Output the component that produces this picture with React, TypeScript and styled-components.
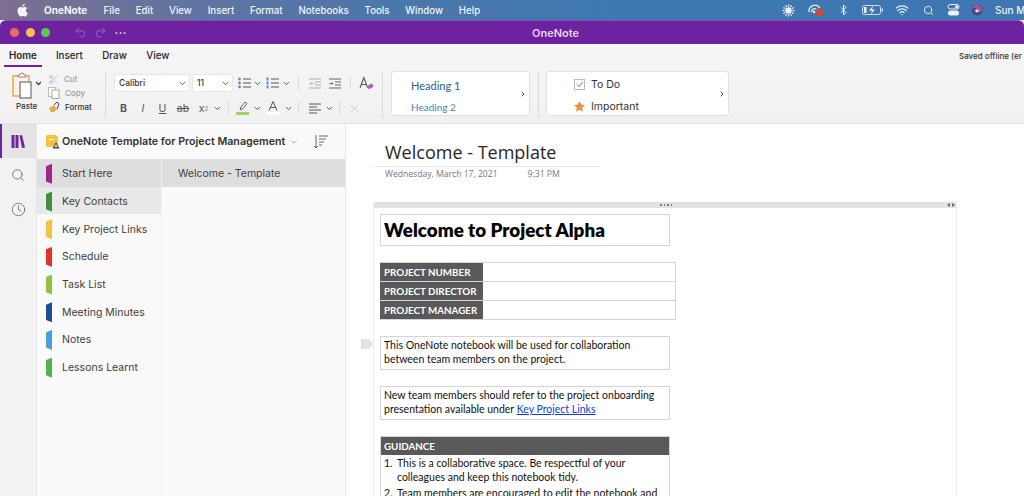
import React from 'react';
import styled, { createGlobalStyle } from 'styled-components';
import { ChevronDown, ChevronRight, Clock, Redo2, Scissors, Search, Undo2, Wifi, X } from 'lucide-react';

const GlobalStyle = createGlobalStyle`
	html, body { margin: 0; padding: 0; height: 100%; overflow: hidden; }
	body { font-family: Inter, "Liberation Sans", sans-serif; background: #fafafa; }
`;

const Screen = styled.div`
	width: 1024px;
	height: 496px;
	display: flex;
	flex-direction: column;
	overflow: hidden;
`;

// mac menu bar
const MenuBar = styled.div`
	height: 20px;
	flex: none;
	display: flex;
	align-items: center;
	padding-left: 16px;
	background: linear-gradient(90deg, #7d6f90 0%, #5f74a3 20%, #4a77ac 40%, #3e78b2 60%, #3d76b0 100%);
	color: #f2f4f8;
	font-size: 10px;
	font-weight: 500;
	white-space: nowrap;
`;
const MenuItem = styled.span<{ $bold?: boolean }>`
	margin-right: ${(p) => (p.$bold ? 16.4 : 15.8)}px;
	font-size: ${(p) => (p.$bold ? 10 : 9.7)}px;
	font-weight: ${(p) => (p.$bold ? 700 : 500)};
`;
const AppleLogo = styled.svg`
	width: 13px;
	height: 14px;
	margin-right: 15px;
	fill: #f4f4f6;
`;
const StatusArea = styled.div`
	margin-left: auto;
	display: flex;
	align-items: center;
	width: 245px;
	flex: none;
	color: #eef2f8;
`;
const StatusSlot = styled.span<{ $w: number }>`
	width: ${(p) => p.$w}px;
	flex: none;
	display: flex;
	align-items: center;
	justify-content: center;
`;
const Clockline = styled.span`
	margin-left: 4px;
`;

// purple window title bar
const TitleBar = styled.div`
	height: 24px;
	flex: none;
	display: flex;
	align-items: center;
	padding-left: 10px;
	background: #6d22a0;
	border-top: 1px solid #8a4fae;
	border-radius: 6px 6px 0 0;
	box-sizing: border-box;
	position: relative;
`;
const Light = styled.span<{ $c: string }>`
	width: 9px;
	height: 9px;
	border-radius: 50%;
	background: ${(p) => p.$c};
	margin-right: 6.500px;
`;
const QuickTools = styled.div`
	display: flex;
	align-items: center;
	gap: 7px;
	margin-left: 17px;
	color: #a176c2;
`;
const MoreDots = styled.span`
	color: #e6d8ef;
	font-size: 11px;
	font-weight: 700;
	letter-spacing: 0.5px;
	margin-left: 1px;
	line-height: 10px;
	padding-bottom: 5px;
`;
const WindowName = styled.span`
	position: absolute;
	left: 532px;
	top: 5px;
	color: #e3d3ee;
	font-size: 11px;
	font-weight: 600;
`;

// ribbon
const Ribbon = styled.div`
	height: 80px;
	flex: none;
	background: linear-gradient(#f6f6f6, #f1f1f1);
	border-bottom: 1px solid #e2e2e2;
	box-sizing: border-box;
	display: flex;
	flex-direction: column;
`;
const TabRow = styled.div`
	height: 23px;
	flex: none;
	display: flex;
	align-items: center;
	padding-left: 4px;
	position: relative;
`;
const Tab = styled.span<{ $active?: boolean }>`
	height: 21px;
	margin-top: 2px;
	box-sizing: border-box;
	padding: 4px 5px 0;
	margin-right: ${(p) => (p.$active ? 9 : 9.500)}px;
	font-size: 9.800px;
	font-weight: ${(p) => (p.$active ? 600 : 500)};
	color: #262626;
	border-bottom: 2px solid ${(p) => (p.$active ? '#6d22a0' : 'transparent')};
`;
const SavedNote = styled.span`
	position: absolute;
	left: 959px;
	top: 7px;
	font-size: 8px;
	font-weight: 500;
	color: #333;
	white-space: nowrap;
`;
const ToolRow = styled.div`
	display: flex;
	align-items: stretch;
	padding: 4px 0 0 10px;
	height: 47px;
`;
const Divider = styled.div<{ $mx: string }>`
	width: 1px;
	flex: none;
	background: #dcdcdc;
	margin: ${(p) => p.$mx};
`;
const PasteGroup = styled.div`
	width: 38px;
	flex: none;
	padding-top: 1px;
	display: flex;
	flex-direction: column;
	align-items: flex-start;
	font-size: 8px;
	font-weight: 500;
	color: #333;
`;
const PasteLabel = styled.span`
	margin: 1px 0 0 6px;
`;
const ClipGroup = styled.div`
	display: flex;
	flex-direction: column;
	gap: 2px;
	padding-top: 2px;
	width: 57px;
	flex: none;
`;
const ClipRow = styled.div<{ $dim?: boolean }>`
	display: flex;
	align-items: center;
	gap: 5px;
	height: 12px;
	font-size: 8px;
	font-weight: 500;
	color: ${(p) => (p.$dim ? '#9c9c9c' : '#333')};
`;
const FontGroup = styled.div`
	width: 268px;
	flex: none;
	display: flex;
	flex-direction: column;
	gap: 7px;
	padding-top: 3px;
`;
const IconRow = styled.div`
	display: flex;
	align-items: center;
	height: 18px;
`;
const Select = styled.div<{ $w: number }>`
	width: ${(p) => p.$w}px;
	height: 18px;
	box-sizing: border-box;
	margin-right: 2px;
	background: #fff;
	border-radius: 3px;
	border: 1px solid #e8e8e8;
	display: flex;
	align-items: center;
	justify-content: space-between;
	padding: 0 2px 0 4px;
	font-size: 8.500px;
	font-weight: 500;
	color: #333;
`;
const FormatBtn = styled.span<{ $w?: number; $ml?: number; $italic?: boolean; $bold?: boolean; $deco?: string }>`
	width: ${(p) => p.$w ?? 20}px;
	margin-left: ${(p) => p.$ml ?? 0}px;
	flex: none;
	display: inline-flex;
	align-items: center;
	justify-content: center;
	font-size: 10.500px;
	font-weight: ${(p) => (p.$bold ? 700 : 400)};
	font-style: ${(p) => (p.$italic ? 'italic' : 'normal')};
	text-decoration: ${(p) => p.$deco ?? 'none'};
	color: #555;
`;
const Subscript = styled.sub`
	font-size: 6px;
	color: #4a90d9;
`;
const Caret = styled(ChevronDown).attrs({ size: 9, strokeWidth: 2.400 })`
	color: #444;
	flex: none;
`;
const ThinRule = styled.span<{ $ml: number }>`
	width: 1px;
	height: 14px;
	margin-left: ${(p) => p.$ml}px;
	background: #ddd;
	flex: none;
`;
const StyleCard = styled.div<{ $w: number }>`
	width: ${(p) => p.$w}px;
	height: 45px;
	box-sizing: border-box;
	flex: none;
	background: #fff;
	border: 1px solid #e0e0e0;
	border-radius: 3px;
	display: flex;
	align-items: center;
	position: relative;
`;
const CardList = styled.div<{ $pl: number; $pt: number; $gap: number }>`
	display: flex;
	flex-direction: column;
	gap: ${(p) => p.$gap}px;
	padding: ${(p) => p.$pt}px 0 0 ${(p) => p.$pl}px;
	flex: 1;
`;
const CardArrow = styled(ChevronRight).attrs({ size: 8, strokeWidth: 3 })`
	color: #444;
	margin-right: 2px;
	flex: none;
`;
const HeadingOne = styled.span`
	font-family: Lato, sans-serif;
	font-size: 11px;
	color: #2f5b92;
`;
const HeadingTwo = styled.span`
	font-family: Lato, sans-serif;
	font-size: 10px;
	color: #3f7fc4;
`;
const TagRow = styled.div`
	display: flex;
	align-items: center;
	gap: 6px;
	font-size: 10.500px;
	color: #333;
`;

// main body
const Main = styled.div`
	flex: 1;
	display: flex;
	min-height: 0;
`;
const Rail = styled.div`
	width: 37px;
	flex: none;
	background: #f2f2f2;
	display: flex;
	flex-direction: column;
	align-items: stretch;
	border-right: 1px solid #e6e6e6;
	box-sizing: border-box;
`;
const RailButton = styled.div<{ $active?: boolean }>`
	height: 34px;
	display: flex;
	align-items: center;
	justify-content: center;
	color: #666;
	background: ${(p) => (p.$active ? '#e4e4e4' : 'transparent')};
	box-shadow: ${(p) => (p.$active ? 'inset 2px 0 0 #6d22a0' : 'none')};
`;
const Nav = styled.div`
	width: 309px;
	flex: none;
	display: flex;
	flex-direction: column;
	background: #fafafa;
	border-right: 1px solid #e8e8e8;
	box-sizing: border-box;
`;
const NotebookHeader = styled.div`
	height: 35px;
	flex: none;
	display: flex;
	align-items: center;
	padding-left: 8px;
	font-size: 10.700px;
	font-weight: 600;
	color: #333;
	white-space: nowrap;
`;
const NotebookName = styled.span`
	margin-left: 1px;
`;
const NotebookCaret = styled(ChevronDown).attrs({ size: 10, strokeWidth: 1.500 })`
	color: #777;
	margin-left: 4px;
`;
const SortIcon = styled.svg`
	width: 16px;
	height: 15px;
	margin-left: 14px;
`;
const Columns = styled.div`
	flex: 1;
	display: flex;
`;
const SectionList = styled.div`
	width: 125px;
	flex: none;
	border-right: 1px solid #efefef;
	box-sizing: border-box;
`;
const SectionRow = styled.div<{ $bg?: string }>`
	height: 27.700px;
	box-sizing: border-box;
	display: flex;
	align-items: center;
	padding: 2px 0 0 9px;
	gap: 10px;
	font-size: 10.500px;
	color: #404040;
	background: ${(p) => p.$bg ?? 'transparent'};
`;
const SectionTab = styled.span<{ $c: string }>`
	width: 6px;
	height: 20px;
	flex: none;
	background: ${(p) => p.$c};
	clip-path: polygon(0 12%, 100% 0, 100% 100%, 0 88%);
`;
const PageList = styled.div`
	flex: 1;
`;
const PageRow = styled.div`
	height: 28px;
	display: flex;
	align-items: center;
	padding-left: 16px;
	font-size: 10.500px;
	color: #404040;
	background: #dedede;
`;

// note canvas
const Canvas = styled.div`
	flex: 1;
	min-width: 0;
	background: #fff;
	padding: 17px 0 0 29px;
	font-family: Lato, "Liberation Sans", sans-serif;
	overflow: hidden;
`;
const PageTitle = styled.div`
	width: 215px;
	padding-left: 10px;
	height: 25px;
	font-family: "Open Sans", sans-serif;
	font-size: 18px;
	line-height: 22px;
	color: #262626;
	border-bottom: 1px solid #e4e4e4;
	white-space: nowrap;
`;
const PageDate = styled.div`
	display: flex;
	gap: 30px;
	padding: 1px 0 0 10px;
	height: 34px;
	font-family: "Open Sans", sans-serif;
	font-size: 8.600px;
	line-height: 12px;
	color: #777;
`;
const NoteBox = styled.div`
	width: 584px;
	position: relative;
	border-left: 1px solid #ececec;
	border-right: 1px solid #ececec;
	box-sizing: border-box;
	height: 300px;
	margin-left: -2px;
`;
const NoteGrip = styled.div`
	height: 6px;
	background: #e2e2e2;
	display: flex;
	align-items: center;
	padding-left: 286px;
	gap: 2px;
`;
const GripDot = styled.span`
	width: 1.500px;
	height: 1.500px;
	background: #777;
`;
const ResizeMark = styled.svg`
	position: absolute;
	right: 1px;
	top: 1px;
	width: 8px;
	height: 4px;
`;
const NoteBody = styled.div`
	padding: 6px 0 0 6px;
	color: #111;
`;
const Headline = styled.div`
	width: 290px;
	height: 32px;
	box-sizing: border-box;
	border: 1px solid #d5d5d5;
	padding-left: 3px;
	font-size: 18.800px;
	line-height: 29px;
	font-weight: 800;
	color: #000;
	white-space: nowrap;
`;
const InfoTable = styled.div`
	width: 296px;
	margin-top: 16px;
	display: grid;
	grid-template-columns: 103px 1fr;
	grid-auto-rows: 19px;
	border-top: 1px solid #d5d5d5;
`;
const InfoLabel = styled.div`
	background: #595959;
	color: #fff;
	font-size: 9.800px;
	font-weight: 700;
	line-height: 18px;
	padding-left: 4px;
	border-bottom: 1px solid #d5d5d5;
	box-sizing: border-box;
	white-space: nowrap;
`;
const InfoValue = styled.div`
	border: 1px solid #d5d5d5;
	border-width: 0 1px 1px 0;
`;
const TextBox = styled.div`
	width: 290px;
	height: 34px;
	margin-top: 16px;
	box-sizing: border-box;
	border: 1px solid #d5d5d5;
	padding: 2px 3px 0;
	font-size: 10.500px;
	line-height: 13.700px;
	white-space: nowrap;
	position: relative;
`;
const ParaHandle = styled.svg`
	position: absolute;
	left: -20px;
	top: 2px;
	width: 12px;
	height: 10px;
`;
const DocLink = styled.a`
	color: #0a3fe0;
	text-decoration: underline;
`;
const GuidanceBox = styled.div`
	width: 290px;
	margin-top: 16px;
	box-sizing: border-box;
	border: 1px solid #d5d5d5;
	font-size: 10.500px;
	line-height: 13.800px;
`;
const GuidanceHead = styled.div`
	height: 18px;
	background: #595959;
	color: #fff;
	font-weight: 700;
	font-size: 9.800px;
	line-height: 18px;
	padding-left: 3px;
`;
const GuidanceItem = styled.div`
	display: flex;
	padding: 2px 0 0 3px;
	white-space: nowrap;
`;
const ItemNumber = styled.span`
	width: 13px;
	flex: none;
`;

const MENUS = ['File', 'Edit', 'View', 'Insert', 'Format', 'Notebooks', 'Tools', 'Window', 'Help'];
const SECTIONS = [
	{ name: 'Start Here', color: '#a6208e', bg: '#dedede' },
	{ name: 'Key Contacts', color: '#3f8f3f', bg: '#e9e9e9' },
	{ name: 'Key Project Links', color: '#f7c23e' },
	{ name: 'Schedule', color: '#e0312a' },
	{ name: 'Task List', color: '#8cc63f' },
	{ name: 'Meeting Minutes', color: '#1f4e8f' },
	{ name: 'Notes', color: '#479fdc' },
	{ name: 'Lessons Learnt', color: '#4fb34f' },
];

const BulletIcon = ({ numbered }: { numbered?: boolean }) => (
	<svg width="13" height="12" viewBox="0 0 13 12">
		{[2, 6, 10].map((y) => (
			<g key={y}>
				{numbered ? <rect x="0.500" y={y - 1.500} width="2" height="3" fill="#4a90d9" /> : <circle cx="1.500" cy={y} r="1.400" fill="#4a90d9" />}
				<line x1="5" x2="13" y1={y} y2={y} stroke="#555" strokeWidth="1" />
			</g>
		))}
	</svg>
);

const IndentIcon = ({ reverse }: { reverse?: boolean }) => (
	<svg width="12" height="11" viewBox="0 0 12 11" opacity={reverse ? 0.5 : 1}>
		<line x1="0" x2="12" y1="1" y2="1" stroke="#666" />
		<line x1="6" x2="12" y1="4" y2="4" stroke="#666" />
		<line x1="6" x2="12" y1="7" y2="7" stroke="#666" />
		<line x1="0" x2="12" y1="10" y2="10" stroke="#666" />
		<path d={reverse ? 'M5 5.500H1M2.500 4L1 5.500 2.500 7' : 'M0 5.500H4M2.500 4L4 5.500 2.500 7'} stroke="#4a90d9" fill="none" />
	</svg>
);

function App() {
	return (
		<Screen>
			<GlobalStyle />
			<MenuBar>
				<AppleLogo viewBox="0 0 14 16">
					<path d="M10.800 8.500c0-1.700 1.400-2.500 1.500-2.600-.8-1.200-2.100-1.400-2.500-1.400-1.100-.1-2.100.6-2.600.6-.6 0-1.400-.6-2.300-.6C3.700 4.500 2.500 5.200 1.900 6.300.6 8.500 1.600 11.800 2.800 13.600c.6.900 1.300 1.900 2.300 1.800.9 0 1.300-.6 2.400-.6s1.400.6 2.400.6 1.600-.9 2.200-1.800c.7-1 1-2 1-2.100-.1 0-2.300-.9-2.300-3zM9 3.200c.5-.6.800-1.500.7-2.300-.7 0-1.600.5-2.100 1.100-.5.500-.9 1.400-.8 2.200.8.100 1.700-.4 2.200-1z" />
				</AppleLogo>
				<MenuItem $bold>OneNote</MenuItem>
				{MENUS.map((m) => (
					<MenuItem key={m}>{m}</MenuItem>
				))}
				<StatusArea>
					<StatusSlot $w={18}>
						<svg width="13" height="13" viewBox="0 0 13 13">
							<circle cx="6.500" cy="6.500" r="3.200" fill="#f2f4f8" />
							{[0, 30, 60, 90, 120, 150, 180, 210, 240, 270, 300, 330].map((a) => (
								<line key={a} x1="6.500" y1="0.500" x2="6.500" y2="2.500" stroke="#f2f4f8" strokeWidth="1.300" transform={`rotate(${a} 6.500 6.500)`} />
							))}
						</svg>
					</StatusSlot>
					<StatusSlot $w={36}>
						<svg width="17" height="14" viewBox="0 0 17 14">
							<path d="M2 9a6 6 0 0 1 11-4M4.500 9a3.500 3.500 0 0 1 5-3" fill="none" stroke="#e6ebf2" strokeWidth="1.300" />
							<circle cx="7" cy="9" r="1.300" fill="#e6ebf2" />
							<circle cx="12.500" cy="9.500" r="3.500" fill="#e0451f" />
						</svg>
					</StatusSlot>
					<StatusSlot $w={20}>
						<svg width="7" height="12" viewBox="0 0 7 12">
							<path d="M1 3.500l5 5L3.500 11V1L6 3.500l-5 5" fill="none" stroke="#eef2f8" strokeWidth="1" />
						</svg>
					</StatusSlot>
					<StatusSlot $w={38}>
						<svg width="21" height="10" viewBox="0 0 21 10">
							<rect x="0.500" y="0.500" width="18" height="9" rx="2" fill="none" stroke="#d6deea" />
							<rect x="19.500" y="3.500" width="1.500" height="3" fill="#d6deea" />
							<rect x="2" y="2" width="2.500" height="6" fill="#eef2f8" />
							<path d="M11 1L7 5.500h3L9 9l4-4.500h-3z" fill="#eef2f8" />
						</svg>
					</StatusSlot>
					<StatusSlot $w={22}>
						<Wifi size={14} strokeWidth={2.200} />
					</StatusSlot>
					<StatusSlot $w={30}>
						<Search size={11} strokeWidth={2} />
					</StatusSlot>
					<StatusSlot $w={20}>
						<svg width="13" height="12" viewBox="0 0 13 12">
							<rect x="1" y="0.500" width="11" height="4.500" rx="2.200" fill="none" stroke="#eef2f8" />
							<circle cx="9.500" cy="2.700" r="1.500" fill="#eef2f8" />
							<rect x="1" y="6.500" width="11" height="5" rx="2.500" fill="#eef2f8" />
						</svg>
					</StatusSlot>
					<StatusSlot $w={28}>
						<svg width="12" height="12" viewBox="0 0 12 12">
							<circle cx="6" cy="6" r="5.500" fill="#4a4a78" />
							<path d="M1 6c2-3 3-3 5 0s3 3 5 0c-1-4-3-5-5-5S2 2 1 6z" fill="#b0509a" />
							<path d="M4 6.500c1-1.500 3-1.500 4 0-1 2.500-3 2.500-4 0z" fill="#e8eef6" />
						</svg>
					</StatusSlot>
					<Clockline>Sun M</Clockline>
				</StatusArea>
			</MenuBar>

			<TitleBar>
				<Light $c="#ed6a5e" />
				<Light $c="#f4bf4f" />
				<Light $c="#61c554" />
				<QuickTools>
					<Undo2 size={13} strokeWidth={1.500} />
					<Redo2 size={13} strokeWidth={1.500} />
					<MoreDots>...</MoreDots>
				</QuickTools>
				<WindowName>OneNote</WindowName>
			</TitleBar>

			<Ribbon>
				<TabRow>
					<Tab $active>Home</Tab>
					<Tab>Insert</Tab>
					<Tab>Draw</Tab>
					<Tab>View</Tab>
					<SavedNote>Saved offline (er</SavedNote>
				</TabRow>
				<ToolRow>
					<PasteGroup>
						<svg width="31" height="28" viewBox="0 0 31 28">
							<path d="M5 4h14v20H3V4z" fill="#fdf4e6" stroke="#eda64e" strokeWidth="1.500" />
							<path d="M8 5V3h2a2 2 0 0 1 4 0h2v2z" fill="#fff" stroke="#888" />
							<rect x="10" y="10" width="11" height="16" fill="#fff" stroke="#555" />
							<path d="M26 10l2.500 2.500L31 10" fill="none" stroke="#444" strokeWidth="1.300" />
						</svg>
						<PasteLabel>Paste</PasteLabel>
					</PasteGroup>
					<ClipGroup>
						<ClipRow $dim>
							<Scissors size={11} strokeWidth={1.200} color="#8da6c0" />
							Cut
						</ClipRow>
						<ClipRow $dim>
							<svg width="12" height="12" viewBox="0 0 12 12">
								<rect x="0.500" y="0.500" width="7" height="9" fill="#fff" stroke="#bbb" />
								<rect x="4" y="3" width="7" height="8.500" fill="#fff" stroke="#aaa" />
							</svg>
							Copy
						</ClipRow>
						<ClipRow>
							<svg width="12" height="12" viewBox="0 0 12 12">
								<path d="M1 7l5-3 3 4-3 3H3z" fill="#eda64e" />
								<path d="M6 4l3-3 2 2-2 5" fill="none" stroke="#444" />
							</svg>
							Format
						</ClipRow>
					</ClipGroup>
					<Divider $mx="0 8px 0 0" />
					<FontGroup>
						<IconRow>
							<Select $w={76}>
								Calibri
								<Caret />
							</Select>
							<Select $w={41}>
								11
								<Caret />
							</Select>
							<FormatBtn $w={18}>
								<BulletIcon />
							</FormatBtn>
							<Caret />
							<FormatBtn $w={20}>
								<BulletIcon numbered />
							</FormatBtn>
							<Caret />
							<ThinRule $ml={7} />
							<FormatBtn $ml={6}>
								<IndentIcon reverse />
							</FormatBtn>
							<FormatBtn>
								<IndentIcon />
							</FormatBtn>
							<ThinRule $ml={5} />
							<FormatBtn $ml={5}>
								<svg width="15" height="15" viewBox="0 0 14 14">
									<path d="M1 11L4.500 1.500 8 11M2.300 8h4.400" fill="none" stroke="#555" />
									<rect x="8" y="8" width="5.500" height="3.500" rx="1" fill="#b25fc4" transform="rotate(-30 10.500 10)" />
								</svg>
							</FormatBtn>
						</IconRow>
						<IconRow>
							<FormatBtn $w={19} $bold>
								B
							</FormatBtn>
							<FormatBtn $w={20} $italic>
								I
							</FormatBtn>
							<FormatBtn $w={19} $deco="underline">
								U
							</FormatBtn>
							<FormatBtn $w={22} $deco="line-through">
								ab
							</FormatBtn>
							<FormatBtn $w={19}>
								x<Subscript>2</Subscript>
							</FormatBtn>
							<Caret />
							<ThinRule $ml={6} />
							<FormatBtn $ml={4}>
								<svg width="14" height="14" viewBox="0 0 14 14">
									<path d="M4 9l1-3 4-5 2 1.500-4 5z" fill="none" stroke="#666" />
									<rect x="0" y="11" width="13" height="3" fill="#9fd36b" />
								</svg>
							</FormatBtn>
							<Caret />
							<FormatBtn $w={22}>
								<svg width="12" height="14" viewBox="0 0 12 14">
									<path d="M2 9.500L6 0.500l4 9M3.300 6.500h5.400" fill="none" stroke="#555" />
									<rect x="0" y="11" width="12" height="3" fill="#fff" />
								</svg>
							</FormatBtn>
							<Caret />
							<ThinRule $ml={5} />
							<FormatBtn $ml={6}>
								<svg width="12" height="11" viewBox="0 0 12 11">
									<path d="M0 1h12M0 4h8M0 7h12M0 10h8" stroke="#555" />
								</svg>
							</FormatBtn>
							<Caret />
							<ThinRule $ml={5} />
							<FormatBtn $w={28}>
								<X size={13} strokeWidth={1.200} color="#e8a8a0" />
							</FormatBtn>
						</IconRow>
					</FontGroup>
					<Divider $mx="0 8px 0 0" />
					<StyleCard $w={139}>
						<CardList $pl={19} $pt={5} $gap={9}>
							<HeadingOne>Heading 1</HeadingOne>
							<HeadingTwo>Heading 2</HeadingTwo>
						</CardList>
						<CardArrow />
					</StyleCard>
					<Divider $mx="0 7px 0 8px" />
					<StyleCard $w={183}>
						<CardList $pl={27} $pt={3} $gap={9}>
							<TagRow>
								<svg width="11" height="11" viewBox="0 0 11 11">
									<rect x="0.500" y="0.500" width="10" height="10" fill="#fff" stroke="#a8bfd6" />
									<path d="M3 5.500l2 2 3.500-4" fill="none" stroke="#d9534f" />
								</svg>
								To Do
							</TagRow>
							<TagRow>
								<svg width="11" height="11" viewBox="0 0 11 11">
									<path d="M5.500 0l1.700 3.600 3.800.5-2.800 2.700.7 3.900-3.400-1.900-3.400 1.900.7-3.900L0 4.100l3.800-.5z" fill="#e8913a" />
								</svg>
								Important
							</TagRow>
						</CardList>
						<CardArrow />
					</StyleCard>
				</ToolRow>
			</Ribbon>

			<Main>
				<Rail>
					<RailButton $active>
						<svg width="14" height="13" viewBox="0 0 14 13">
							<rect x="0.500" y="0" width="3" height="13" fill="#6d22a0" />
							<rect x="4.500" y="0" width="3" height="13" fill="#6d22a0" />
							<path d="M8.500 0.500L11 0l3 12.500-3 .5z" fill="#6d22a0" />
						</svg>
					</RailButton>
					<RailButton>
						<Search size={14} strokeWidth={1.500} />
					</RailButton>
					<RailButton>
						<Clock size={15} strokeWidth={1.300} />
					</RailButton>
				</Rail>
				<Nav>
					<NotebookHeader>
						<svg width="16" height="15" viewBox="0 0 16 15">
							<path d="M1 2a1 1 0 0 1 1-1h9l2 2v10H2a1 1 0 0 1-1-1z" fill="#f7c23e" />
							<rect x="4" y="5" width="5" height="1" fill="#fff" />
							<path d="M11 8l3.500 6.500h-7z" fill="#444" />
							<path d="M11 10l1.500 3h-3z" fill="#fff" />
						</svg>
						<NotebookName>OneNote Template for Project Management</NotebookName>
						<NotebookCaret />
						<SortIcon viewBox="0 0 16 15">
							<path d="M3 1v13M1 12l2 2 2-2M6 2h9M6 5h7M6 8h5M6 11h3" fill="none" stroke="#666" />
						</SortIcon>
					</NotebookHeader>
					<Columns>
						<SectionList>
							{SECTIONS.map((s) => (
								<SectionRow key={s.name} $bg={s.bg}>
									<SectionTab $c={s.color} />
									{s.name}
								</SectionRow>
							))}
						</SectionList>
						<PageList>
							<PageRow>Welcome - Template</PageRow>
						</PageList>
					</Columns>
				</Nav>
				<Canvas>
					<PageTitle>Welcome - Template</PageTitle>
					<PageDate>
						<span>Wednesday, March 17, 2021</span>
						<span>9:31 PM</span>
					</PageDate>
					<NoteBox>
						<NoteGrip>
							<GripDot />
							<GripDot />
							<GripDot />
							<GripDot />
							<ResizeMark viewBox="0 0 8 4">
								<path d="M3 0v4L0 2zM5 0v4l3-2z" fill="#666" />
							</ResizeMark>
						</NoteGrip>
						<NoteBody>
							<Headline>Welcome to Project Alpha</Headline>
							<InfoTable>
								<InfoLabel>PROJECT NUMBER</InfoLabel>
								<InfoValue />
								<InfoLabel>PROJECT DIRECTOR</InfoLabel>
								<InfoValue />
								<InfoLabel>PROJECT MANAGER</InfoLabel>
								<InfoValue />
							</InfoTable>
							<TextBox>
								<ParaHandle viewBox="0 0 12 10">
									<path d="M0 0h8l4 5-4 5H0z" fill="#e2e2e2" />
								</ParaHandle>
								This OneNote notebook will be used for collaboration
								<br />
								between team members on the project.
							</TextBox>
							<TextBox>
								New team members should refer to the project onboarding
								<br />
								presentation available under <DocLink>Key Project Links</DocLink>
							</TextBox>
							<GuidanceBox>
								<GuidanceHead>GUIDANCE</GuidanceHead>
								<GuidanceItem>
									<ItemNumber>1.</ItemNumber>
									<span>
										This is a collaborative space. Be respectful of your
										<br />
										colleagues and keep this notebook tidy.
									</span>
								</GuidanceItem>
								<GuidanceItem>
									<ItemNumber>2.</ItemNumber>
									<span>Team members are encouraged to edit the notebook and</span>
								</GuidanceItem>
							</GuidanceBox>
						</NoteBody>
					</NoteBox>
				</Canvas>
			</Main>
		</Screen>
	);
}

export default App;
